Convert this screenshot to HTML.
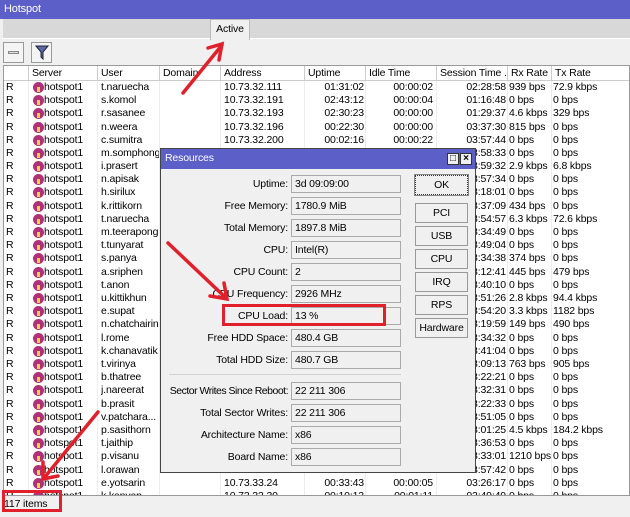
<!DOCTYPE html>
<html><head><meta charset="utf-8"><style>
*{margin:0;padding:0;box-sizing:border-box}
body{width:630px;height:517px;overflow:hidden;background:#f0f0f0;font-family:"Liberation Sans",sans-serif;font-size:10.5px;letter-spacing:-0.15px;color:#000;position:relative}
.abs{position:absolute}
#title{left:0;top:0;width:630px;height:19px;background:#5b5fc7;color:#fff;padding:3px 0 0 4px;font-size:11px}
#tabs{left:3px;top:19px;width:627px;height:20px;background:#d8d8d8;border-bottom:1px solid #fff}
#tab{left:210px;top:19px;width:40px;height:21px;background:#f0f0f0;border:1px solid #bbb;border-bottom:none;text-align:center;padding-top:3px}
.tb{top:42px;width:21px;height:21px;border:1px solid #999;background:#f4f4f4}
#grid{left:3px;top:65px;width:627px;height:431px;background:#fff;border:1px solid #999;overflow:hidden}
.hd{position:absolute;top:0;height:15px;border-right:1px solid #ccc;border-bottom:1px solid #ccc;background:#fff;padding:1px 0 0 3px;white-space:nowrap;overflow:hidden}
.vl{position:absolute;top:15px;width:1px;height:420px;background:#ececec}
.r{position:absolute;left:0;width:627px;height:13px;white-space:nowrap}
.r span{position:absolute;top:0;overflow:hidden}
.c0{left:2px}.c1{left:28px;padding-left:12px;width:65px}.c2{left:97px;width:58px}.c3{left:220px}
.c4{left:301px;width:59px;text-align:right}.c5{left:362px;width:67px;text-align:right}
.c6{left:433px;width:69px;text-align:right}.c7{left:505px;width:42px}.c8{left:549px}
.ic{position:absolute;left:29px;top:1px;width:11px;height:11px;border-radius:50%;background:#b0307a}
.ic:after{content:"";position:absolute;left:4px;top:5px;width:3px;height:5px;background:#f3d23a}
#status{left:0;top:496px;width:630px;height:17px;background:#f0f0f0;padding:2px 0 0 4px}
#dlg{left:160px;top:148px;width:316px;height:325px;background:#f0f0f0;border:1px solid #444}
#dt{left:0;top:0;width:314px;height:20px;background:#5b5fc7;color:#fff;padding:3px 0 0 4px}
.wb{top:4px;width:12px;height:12px;background:#f0f0f0;border:1px solid #333;font-size:10px;line-height:10px;text-align:center;color:#000;font-weight:bold}
.lb{position:absolute;left:-10px;width:137px;text-align:right;white-space:nowrap}
.fd{position:absolute;left:130px;width:110px;height:18px;border:1px solid #aaa;background:#f0f0f0;padding:2px 0 0 3px}
.bt{position:absolute;left:254px;width:53px;height:20px;border:1px solid #999;background:#f0f0f0;text-align:center;padding-top:3px}
</style></head><body>
<div id="title" class="abs">Hotspot</div>
<div id="tabs" class="abs"></div>
<div id="tab" class="abs">Active</div>
<div class="abs tb" style="left:3px"><div class="abs" style="left:4px;top:8px;width:11px;height:3px;border:1px solid #888;background:#ddd"></div></div>
<div class="abs tb" style="left:31px"><svg class="abs" style="left:3px;top:2px" width="14" height="15"><path d="M1 1H13L8 7V14L6 12V7Z" fill="#5a6aa8" stroke="#223"/></svg></div>
<div id="grid" class="abs">
<div class="hd" style="left:0;width:25px"></div>
<div class="hd" style="left:25px;width:69px">Server</div>
<div class="hd" style="left:94px;width:62px">User</div>
<div class="hd" style="left:156px;width:61px">Domain</div>
<div class="hd" style="left:217px;width:84px">Address</div>
<div class="hd" style="left:301px;width:61px">Uptime</div>
<div class="hd" style="left:362px;width:71px">Idle Time</div>
<div class="hd" style="left:433px;width:71px">Session Time ...</div>
<div class="hd" style="left:504px;width:44px">Rx Rate</div>
<div class="hd" style="left:548px;width:79px">Tx Rate</div>
<div class="vl" style="left:24px"></div><div class="vl" style="left:93px"></div><div class="vl" style="left:155px"></div><div class="vl" style="left:216px"></div><div class="vl" style="left:300px"></div><div class="vl" style="left:361px"></div><div class="vl" style="left:432px"></div><div class="vl" style="left:503px"></div><div class="vl" style="left:547px"></div>
<div class="r" style="top:15px"><span class="c0">R</span><i class="ic"></i><span class="c1">hotspot1</span><span class="c2">t.naruecha</span><span class="c3">10.73.32.111</span><span class="c4">01:31:02</span><span class="c5">00:00:02</span><span class="c6">02:28:58</span><span class="c7">939 bps</span><span class="c8">72.9 kbps</span></div>
<div class="r" style="top:28px"><span class="c0">R</span><i class="ic"></i><span class="c1">hotspot1</span><span class="c2">s.komol</span><span class="c3">10.73.32.191</span><span class="c4">02:43:12</span><span class="c5">00:00:04</span><span class="c6">01:16:48</span><span class="c7">0 bps</span><span class="c8">0 bps</span></div>
<div class="r" style="top:41px"><span class="c0">R</span><i class="ic"></i><span class="c1">hotspot1</span><span class="c2">r.sasanee</span><span class="c3">10.73.32.193</span><span class="c4">02:30:23</span><span class="c5">00:00:00</span><span class="c6">01:29:37</span><span class="c7">4.6 kbps</span><span class="c8">329 bps</span></div>
<div class="r" style="top:55px"><span class="c0">R</span><i class="ic"></i><span class="c1">hotspot1</span><span class="c2">n.weera</span><span class="c3">10.73.32.196</span><span class="c4">00:22:30</span><span class="c5">00:00:00</span><span class="c6">03:37:30</span><span class="c7">815 bps</span><span class="c8">0 bps</span></div>
<div class="r" style="top:68px"><span class="c0">R</span><i class="ic"></i><span class="c1">hotspot1</span><span class="c2">c.sumitra</span><span class="c3">10.73.32.200</span><span class="c4">00:02:16</span><span class="c5">00:00:22</span><span class="c6">03:57:44</span><span class="c7">0 bps</span><span class="c8">0 bps</span></div>
<div class="r" style="top:81px"><span class="c0">R</span><i class="ic"></i><span class="c1">hotspot1</span><span class="c2">m.somphong</span><span class="c6">03:58:33</span><span class="c7">0 bps</span><span class="c8">0 bps</span></div>
<div class="r" style="top:94px"><span class="c0">R</span><i class="ic"></i><span class="c1">hotspot1</span><span class="c2">i.prasert</span><span class="c6">03:59:32</span><span class="c7">2.9 kbps</span><span class="c8">6.8 kbps</span></div>
<div class="r" style="top:107px"><span class="c0">R</span><i class="ic"></i><span class="c1">hotspot1</span><span class="c2">n.apisak</span><span class="c6">03:57:34</span><span class="c7">0 bps</span><span class="c8">0 bps</span></div>
<div class="r" style="top:120px"><span class="c0">R</span><i class="ic"></i><span class="c1">hotspot1</span><span class="c2">h.sirilux</span><span class="c6">03:18:01</span><span class="c7">0 bps</span><span class="c8">0 bps</span></div>
<div class="r" style="top:134px"><span class="c0">R</span><i class="ic"></i><span class="c1">hotspot1</span><span class="c2">k.rittikorn</span><span class="c6">03:37:09</span><span class="c7">434 bps</span><span class="c8">0 bps</span></div>
<div class="r" style="top:147px"><span class="c0">R</span><i class="ic"></i><span class="c1">hotspot1</span><span class="c2">t.naruecha</span><span class="c6">03:54:57</span><span class="c7">6.3 kbps</span><span class="c8">72.6 kbps</span></div>
<div class="r" style="top:160px"><span class="c0">R</span><i class="ic"></i><span class="c1">hotspot1</span><span class="c2">m.teerapong</span><span class="c6">03:34:49</span><span class="c7">0 bps</span><span class="c8">0 bps</span></div>
<div class="r" style="top:173px"><span class="c0">R</span><i class="ic"></i><span class="c1">hotspot1</span><span class="c2">t.tunyarat</span><span class="c6">03:49:04</span><span class="c7">0 bps</span><span class="c8">0 bps</span></div>
<div class="r" style="top:186px"><span class="c0">R</span><i class="ic"></i><span class="c1">hotspot1</span><span class="c2">s.panya</span><span class="c6">03:34:38</span><span class="c7">374 bps</span><span class="c8">0 bps</span></div>
<div class="r" style="top:200px"><span class="c0">R</span><i class="ic"></i><span class="c1">hotspot1</span><span class="c2">a.sriphen</span><span class="c6">03:12:41</span><span class="c7">445 bps</span><span class="c8">479 bps</span></div>
<div class="r" style="top:213px"><span class="c0">R</span><i class="ic"></i><span class="c1">hotspot1</span><span class="c2">t.anon</span><span class="c6">03:40:10</span><span class="c7">0 bps</span><span class="c8">0 bps</span></div>
<div class="r" style="top:226px"><span class="c0">R</span><i class="ic"></i><span class="c1">hotspot1</span><span class="c2">u.kittikhun</span><span class="c6">03:51:26</span><span class="c7">2.8 kbps</span><span class="c8">94.4 kbps</span></div>
<div class="r" style="top:239px"><span class="c0">R</span><i class="ic"></i><span class="c1">hotspot1</span><span class="c2">e.supat</span><span class="c6">03:54:20</span><span class="c7">3.3 kbps</span><span class="c8">1182 bps</span></div>
<div class="r" style="top:252px"><span class="c0">R</span><i class="ic"></i><span class="c1">hotspot1</span><span class="c2">n.chatchairin</span><span class="c6">03:19:59</span><span class="c7">149 bps</span><span class="c8">490 bps</span></div>
<div class="r" style="top:266px"><span class="c0">R</span><i class="ic"></i><span class="c1">hotspot1</span><span class="c2">l.rome</span><span class="c6">03:34:32</span><span class="c7">0 bps</span><span class="c8">0 bps</span></div>
<div class="r" style="top:279px"><span class="c0">R</span><i class="ic"></i><span class="c1">hotspot1</span><span class="c2">k.chanavatik</span><span class="c6">03:41:04</span><span class="c7">0 bps</span><span class="c8">0 bps</span></div>
<div class="r" style="top:292px"><span class="c0">R</span><i class="ic"></i><span class="c1">hotspot1</span><span class="c2">t.virinya</span><span class="c6">03:09:13</span><span class="c7">763 bps</span><span class="c8">905 bps</span></div>
<div class="r" style="top:305px"><span class="c0">R</span><i class="ic"></i><span class="c1">hotspot1</span><span class="c2">b.thatree</span><span class="c6">03:22:21</span><span class="c7">0 bps</span><span class="c8">0 bps</span></div>
<div class="r" style="top:318px"><span class="c0">R</span><i class="ic"></i><span class="c1">hotspot1</span><span class="c2">j.nareerat</span><span class="c6">03:32:31</span><span class="c7">0 bps</span><span class="c8">0 bps</span></div>
<div class="r" style="top:332px"><span class="c0">R</span><i class="ic"></i><span class="c1">hotspot1</span><span class="c2">b.prasit</span><span class="c6">03:22:33</span><span class="c7">0 bps</span><span class="c8">0 bps</span></div>
<div class="r" style="top:345px"><span class="c0">R</span><i class="ic"></i><span class="c1">hotspot1</span><span class="c2">v.patchara...</span><span class="c6">03:51:05</span><span class="c7">0 bps</span><span class="c8">0 bps</span></div>
<div class="r" style="top:358px"><span class="c0">R</span><i class="ic"></i><span class="c1">hotspot1</span><span class="c2">p.sasithorn</span><span class="c6">03:01:25</span><span class="c7">4.5 kbps</span><span class="c8">184.2 kbps</span></div>
<div class="r" style="top:371px"><span class="c0">R</span><i class="ic"></i><span class="c1">hotspot1</span><span class="c2">t.jaithip</span><span class="c6">03:36:53</span><span class="c7">0 bps</span><span class="c8">0 bps</span></div>
<div class="r" style="top:384px"><span class="c0">R</span><i class="ic"></i><span class="c1">hotspot1</span><span class="c2">p.visanu</span><span class="c6">03:33:01</span><span class="c7">1210 bps</span><span class="c8">0 bps</span></div>
<div class="r" style="top:398px"><span class="c0">R</span><i class="ic"></i><span class="c1">hotspot1</span><span class="c2">l.orawan</span><span class="c6">03:57:42</span><span class="c7">0 bps</span><span class="c8">0 bps</span></div>
<div class="r" style="top:411px"><span class="c0">R</span><i class="ic"></i><span class="c1">hotspot1</span><span class="c2">e.yotsarin</span><span class="c3">10.73.33.24</span><span class="c4">00:33:43</span><span class="c5">00:00:05</span><span class="c6">03:26:17</span><span class="c7">0 bps</span><span class="c8">0 bps</span></div>
<div class="r" style="top:424px"><span class="c0">R</span><i class="ic"></i><span class="c1">hotspot1</span><span class="c2">k.kanyap</span><span class="c3">10.73.33.30</span><span class="c4">00:10:13</span><span class="c5">00:01:11</span><span class="c6">03:49:49</span><span class="c7">0 bps</span><span class="c8">0 bps</span></div>
</div>
<div id="status" class="abs">117 items</div>
<div id="dlg" class="abs">
<div id="dt" class="abs">Resources</div>
<div class="abs wb" style="left:286px">□</div><div class="abs wb" style="left:299px">×</div>
<div class="lb" style="top:29px">Uptime:</div><div class="fd" style="top:26px">3d 09:09:00</div>
<div class="lb" style="top:51px">Free Memory:</div><div class="fd" style="top:48px">1780.9 MiB</div>
<div class="lb" style="top:73px">Total Memory:</div><div class="fd" style="top:70px">1897.8 MiB</div>
<div class="lb" style="top:95px">CPU:</div><div class="fd" style="top:92px">Intel(R)</div>
<div class="lb" style="top:117px">CPU Count:</div><div class="fd" style="top:114px">2</div>
<div class="lb" style="top:139px">CPU Frequency:</div><div class="fd" style="top:136px">2926 MHz</div>
<div class="lb" style="top:161px">CPU Load:</div><div class="fd" style="top:158px">13 %</div>
<div class="lb" style="top:183px">Free HDD Space:</div><div class="fd" style="top:180px">480.4 GB</div>
<div class="lb" style="top:205px">Total HDD Size:</div><div class="fd" style="top:202px">480.7 GB</div>
<div class="abs" style="left:8px;top:225px;width:232px;height:1px;background:#d0d0d0"></div>
<div class="lb" style="top:236px;letter-spacing:-0.5px">Sector Writes Since Reboot:</div><div class="fd" style="top:233px">22 211 306</div>
<div class="lb" style="top:258px">Total Sector Writes:</div><div class="fd" style="top:255px">22 211 306</div>
<div class="lb" style="top:280px">Architecture Name:</div><div class="fd" style="top:277px">x86</div>
<div class="lb" style="top:302px">Board Name:</div><div class="fd" style="top:299px">x86</div>
<div class="bt" style="top:26px;border:1px dotted #333;outline:1px solid #888">OK</div>
<div class="bt" style="top:54px">PCI</div>
<div class="bt" style="top:77px">USB</div>
<div class="bt" style="top:100px">CPU</div>
<div class="bt" style="top:123px">IRQ</div>
<div class="bt" style="top:146px">RPS</div>
<div class="bt" style="top:169px">Hardware</div>
</div>
<div class="abs" style="left:222px;top:304px;width:164px;height:22px;border:3px solid #e0202a"></div>
<div class="abs" style="left:2px;top:490px;width:60px;height:22px;border:3px solid #e0202a"></div>
<svg class="abs" style="left:0;top:0" width="630" height="517">
<g stroke="#e0202a" stroke-width="3.5" fill="none" stroke-linecap="round">
<path d="M183 93L222 45M208 48L222 44L219 60"/>
<path d="M168 243L226 298M210 296L227 299L224 283"/>
<path d="M98 412L44 478M43 462L43 479L58 476"/>
</g></svg>
</body></html>
